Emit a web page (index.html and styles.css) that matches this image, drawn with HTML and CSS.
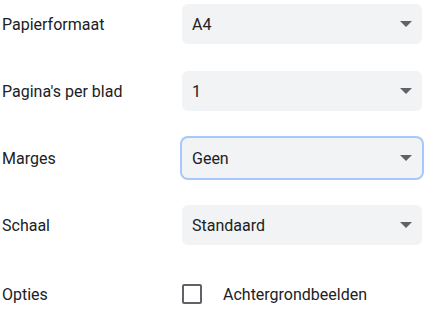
FILE: index.html
```html
<!DOCTYPE html>
<html>
<head>
  <link rel="stylesheet" href="styles.css">
</head>
<body>
  <div class="settings">
    <div class="row">
      <label class="label" for="paper">Papierformaat</label>
      <div class="select" id="paper">A4<span class="arrow"></span></div>
    </div>
    <div class="row">
      <label class="label" for="pages">Pagina's per blad</label>
      <div class="select" id="pages">1<span class="arrow"></span></div>
    </div>
    <div class="row">
      <label class="label" for="margins">Marges</label>
      <div class="select focused" id="margins">Geen<span class="arrow"></span></div>
    </div>
    <div class="row">
      <label class="label" for="scale">Schaal</label>
      <div class="select" id="scale">Standaard<span class="arrow"></span></div>
    </div>
    <div class="row options">
      <span class="label">Opties</span>
      <div class="option">
        <span class="checkbox"></span>
        <span>Achtergrondbeelden</span>
      </div>
    </div>
  </div>
</body>
</html>
```

FILE: styles.css
```css
body {
  margin: 0;
  font-family: Roboto, "Liberation Sans", sans-serif;
  font-size: 16px;
  color: #202124;
  background: #fff;
}

.settings {
  display: flex;
  flex-direction: column;
  gap: 27px;
  padding-top: 4px;
}

.row {
  display: grid;
  grid-template-columns: 182px 240px;
  align-items: center;
  height: 40px;
}

.row.options {
  margin-top: 2px;
}

.label {
  padding-left: 2px;
}

.select {
  display: flex;
  align-items: center;
  justify-content: space-between;
  height: 40px;
  box-sizing: border-box;
  padding: 0 10px;
  background: #f1f3f4;
  border-radius: 6px;
}

.select.focused {
  box-shadow: 0 0 0 2px #a8c7fa;
}

.arrow {
  width: 0;
  height: 0;
  border-left: 6px solid transparent;
  border-right: 6px solid transparent;
  border-top: 6px solid #5f6368;
}

.option {
  display: flex;
  align-items: center;
  gap: 21px;
}

.checkbox {
  width: 20px;
  height: 20px;
  box-sizing: border-box;
  border: 2px solid #5f6368;
  border-radius: 2px;
}
```
